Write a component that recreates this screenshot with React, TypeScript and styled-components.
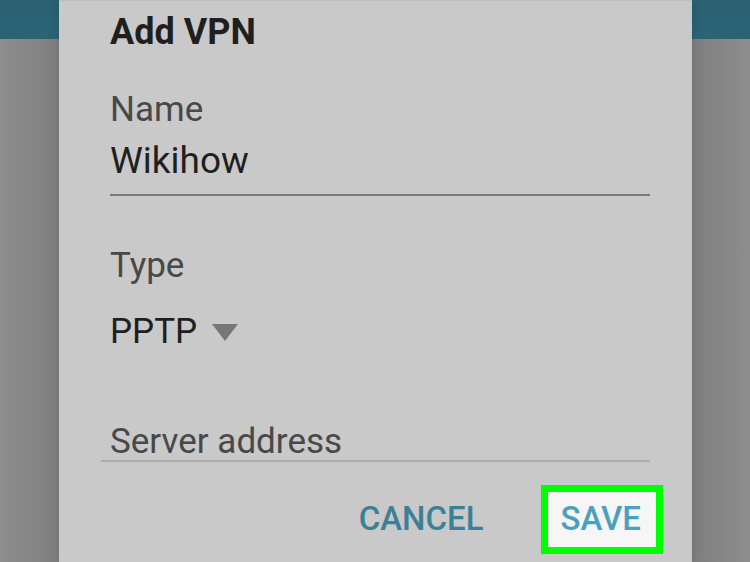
import React from "react";
import styled, { createGlobalStyle } from "styled-components";

const Global = createGlobalStyle`
  html, body { margin: 0; padding: 0; background: #8a8a8a; }
  body { font-family: Roboto, "Noto Sans", "Liberation Sans", sans-serif; }
  * { box-sizing: border-box; }
`;

const Screen = styled.div`
  width: 750px;
  height: 562px;
  overflow: hidden;
  display: flex;
  padding-left: 59px;
  background:
    linear-gradient(to bottom, #2a6072 0, #2b6376 39px, transparent 39px),
    linear-gradient(to right, #8e8e8e 0, #7e7e7e 59px, #7e7e7e 692px, #8e8e8e 750px);
`;

const Dialog = styled.div`
  width: 633px;
  height: 562px;
  background: #c9c9c9;
  border-top: 1px solid #bfbfbf;
  box-shadow: 0 0 10px rgba(0, 0, 0, 0.12);
  padding: 11px 42px 0 51px;
  display: flex;
  flex-direction: column;
`;

const Title = styled.h1`
  margin: 0;
  font-size: 36px;
  line-height: 41px;
  font-weight: 700;
  color: #1f1f1f;
`;

const Label = styled.div<{ $top: number }>`
  margin-top: ${(p) => p.$top}px;
  font-size: 35px;
  line-height: 41px;
  color: #484848;
`;

const Value = styled.div<{ $top: number; $size?: number }>`
  margin-top: ${(p) => p.$top}px;
  font-size: ${(p) => p.$size ?? 35}px;
  line-height: 41px;
  color: #1f1f1f;
  display: flex;
  align-items: center;
`;

const Underline = styled.div`
  margin-top: 13.5px;
  height: 2px;
  background: #7a7a7a;
`;

const Caret = styled.span`
  display: inline-block;
  width: 0;
  height: 0;
  margin-left: 15px;
  margin-top: 2px;
  border-left: 13.5px solid transparent;
  border-right: 13.5px solid transparent;
  border-top: 17px solid #777777;
`;

const Field = styled.div`
  margin-top: 72.5px;
  margin-left: -9px;
  padding-left: 9px;
  font-size: 35px;
  line-height: 36px;
  color: #484848;
  border-bottom: 2px solid #acacac;
`;

const Actions = styled.div`
  margin-top: 23px;
  margin-right: -13px;
  display: flex;
  justify-content: flex-end;
  align-items: center;
`;

const ActionButton = styled.button<{ $focused?: boolean }>`
  font-family: Roboto, "Noto Sans", "Liberation Sans", sans-serif;
  font-size: 33px;
  font-weight: 500;
  line-height: 53px;
  padding: 0 15px 2px 13px;
  margin: 0;
  cursor: pointer;
  border: 7px solid ${(p) => (p.$focused ? "#00ff00" : "transparent")};
  background: ${(p) => (p.$focused ? "#f6f6f6" : "transparent")};
  color: ${(p) => (p.$focused ? "#4aa1bd" : "#3b8097")};
`;

const CancelSpacer = styled.div`
  width: 35px;
`;

export default function App() {
  return (
    <>
      <Global />
      <Screen>
        <Dialog>
          <Title>Add VPN</Title>
          <Label $top={35.5}>Name</Label>
          <Value $top={10} $size={37}>Wikihow</Value>
          <Underline />
          <Label $top={48.5}>Type</Label>
          <Value $top={25}>
            PPTP
            <Caret />
          </Value>
          <Field>Server address</Field>
          <Actions>
            <ActionButton>CANCEL</ActionButton>
            <CancelSpacer />
            <ActionButton $focused>SAVE</ActionButton>
          </Actions>
        </Dialog>
      </Screen>
    </>
  );
}
